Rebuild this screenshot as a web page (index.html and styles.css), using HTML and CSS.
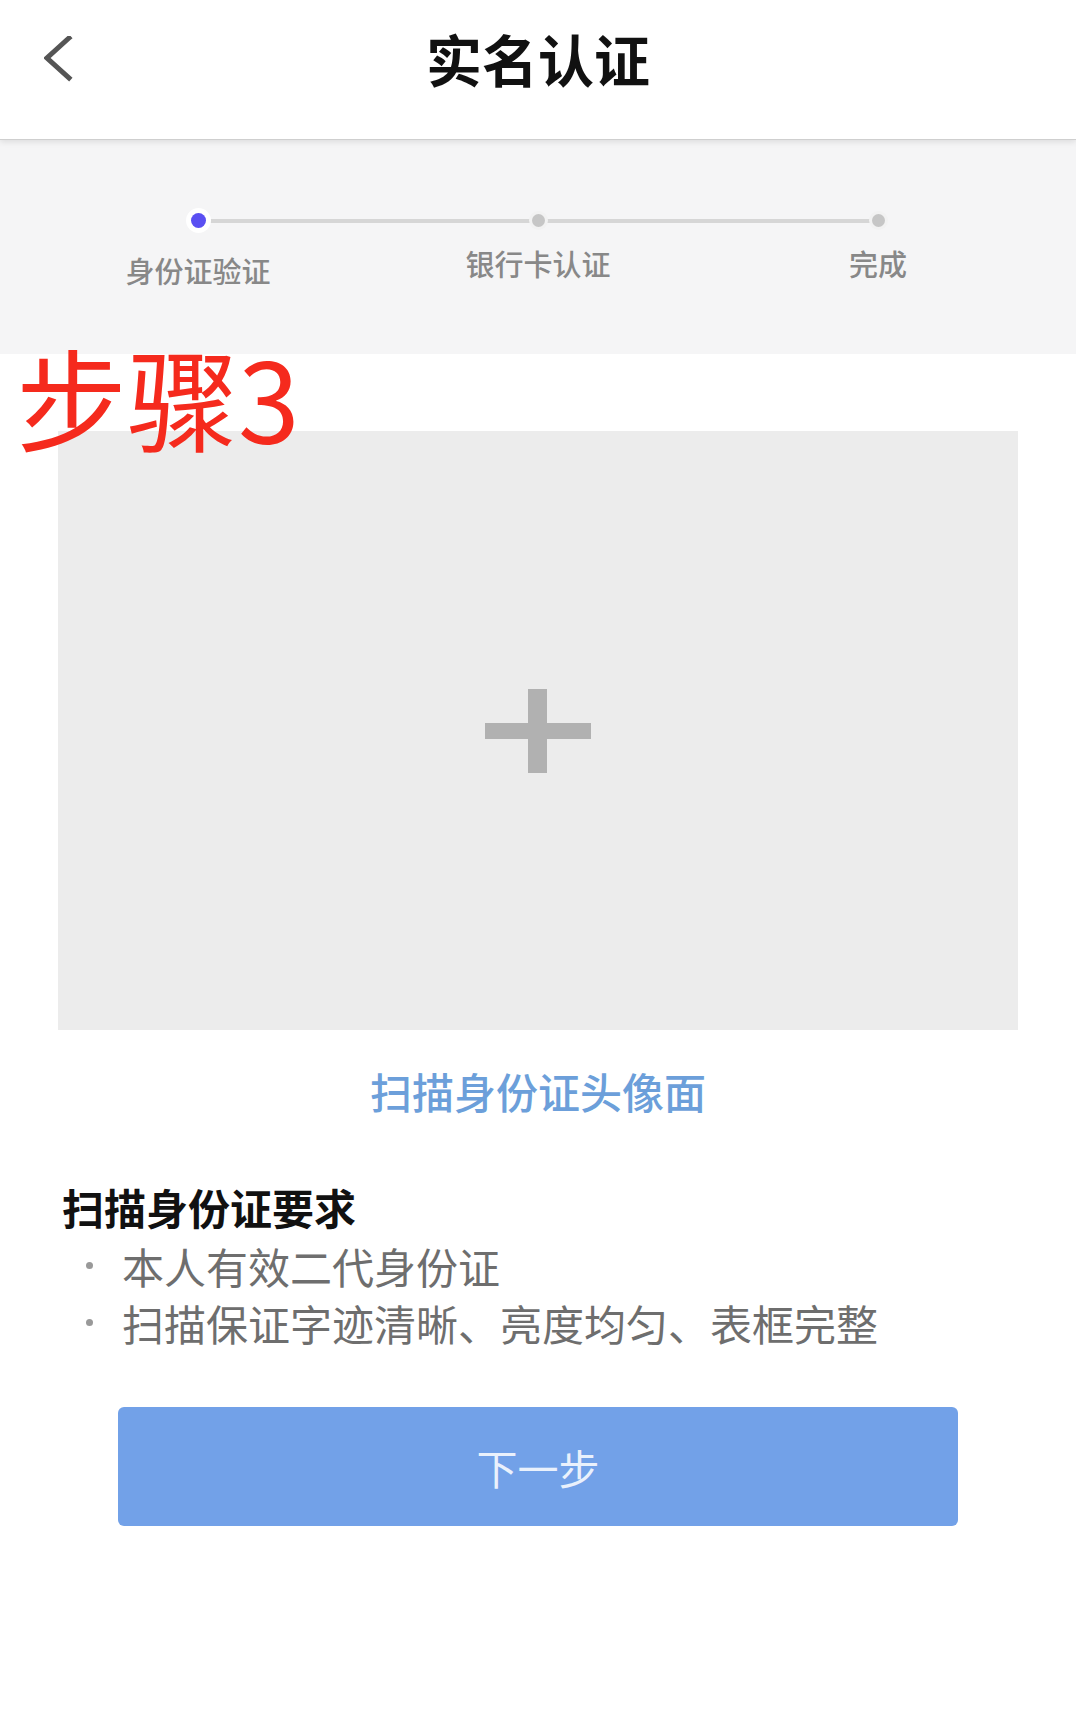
FILE: index.html
```html
<!DOCTYPE html>
<html lang="zh-CN">
<head>
    <meta charset="UTF-8">
    <meta name="viewport" content="width=device-width, initial-scale=1.0">
    <title>实名认证</title>
    <link rel="stylesheet" href="styles.css">
</head>
<body>
    <!-- 顶部导航 -->
    <header class="header">
        <span class="back">
            <svg width="30" height="46" viewBox="0 0 30 46">
                <polyline points="25,2 3,22 25,42" fill="none" stroke="#555" stroke-width="5" stroke-linecap="square"/>
            </svg>
        </span>
        <h1 class="title">实名认证</h1>
        <span></span>
    </header>

    <!-- 步骤条 -->
    <section class="steps">
        <div class="step">
            <span class="dot active"></span>
            <span class="step-label first">身份证验证</span>
        </div>
        <div class="step">
            <span class="dot"></span>
            <span class="step-label">银行卡认证</span>
        </div>
        <div class="step">
            <span class="dot"></span>
            <span class="step-label">完成</span>
        </div>
    </section>

    <main class="content">
        <div class="mark">步骤3</div>

        <!-- 上传框 -->
        <div class="upload">
            <svg width="106" height="84" viewBox="0 0 106 84">
                <rect x="0" y="34" width="106" height="16" fill="#b1b1b1"/>
                <rect x="43" y="0" width="19" height="84" fill="#b1b1b1"/>
            </svg>
        </div>
        <p class="caption">扫描身份证头像面</p>

        <!-- 要求 -->
        <h2 class="req-title">扫描身份证要求</h2>
        <ul class="req-list">
            <li>本人有效二代身份证</li>
            <li>扫描保证字迹清晰、亮度均匀、表框完整</li>
        </ul>

        <button class="next">下一步</button>
    </main>
</body>
</html>
```

FILE: styles.css
```css
body {
    margin: 0;
    padding: 0;
    background: #fff;
    font-family: "Noto Sans CJK SC", "Noto Sans", sans-serif;
    min-height: 1710px;
}
.header {
    position: relative;
    z-index: 2;
    height: 140px;
    box-sizing: border-box;
    display: grid;
    grid-template-columns: 1fr auto 1fr;
    align-items: start;
    padding-top: 30px;
    background: #fff;
    border-bottom: 1px solid #cfcfcf;
    box-shadow: 0 2px 6px rgba(0, 0, 0, 0.1);
}
.back {
    padding-left: 44px;
    padding-top: 6px;
}
.title {
    margin: 0;
    font-size: 56px;
    line-height: 56px;
    font-weight: 700;
    color: #111;
}
/* 步骤条 */
.steps {
    position: relative;
    height: 214px;
    box-sizing: border-box;
    padding-top: 68px;
    background: #f5f5f6;
    display: grid;
    grid-template-columns: repeat(3, 340px);
    justify-content: center;
}
.steps::before {
    content: "";
    position: absolute;
    top: 79px;
    left: 198px;
    right: 198px;
    height: 4px;
    background: #d6d6d6;
}
.step {
    display: flex;
    flex-direction: column;
    align-items: center;
}
.dot {
    position: relative;
    width: 13px;
    height: 13px;
    margin: 6px 0 7px;
    border-radius: 50%;
    background: #c6c6c6;
    box-shadow: 0 0 0 3px #f2f2f2;
}
.dot.active {
    width: 15px;
    height: 15px;
    margin: 5px 0 6px;
    background: #5a4ff2;
    box-shadow: 0 0 0 5px #fff;
}
.step-label {
    margin-top: 15px;
    font-size: 29px;
    line-height: 29px;
    color: #888;
    font-weight: 500;
}
.step-label.first {
    margin-top: 22px;
}
/* 主体 */
.content {
    position: relative;
    padding-top: 77px;
    display: flex;
    flex-direction: column;
    align-items: center;
}
.mark {
    position: absolute;
    top: -14px;
    left: 16px;
    font-size: 111px;
    line-height: 111px;
    color: #f52a1d;
    z-index: 3;
}
.upload {
    width: 960px;
    height: 599px;
    background: #ececec;
    display: flex;
    justify-content: center;
    align-items: center;
}
.caption {
    margin: 40px 0 0;
    font-size: 42px;
    line-height: 42px;
    color: #6c9fda;
    font-weight: 500;
}
.req-title {
    align-self: stretch;
    margin: 74px 0 0 62px;
    font-size: 42px;
    line-height: 42px;
    font-weight: 700;
    color: #111;
}
.req-list {
    align-self: stretch;
    list-style: none;
    margin: 9px 0 0;
    padding: 0 0 0 86px;
}
.req-list li {
    display: flex;
    align-items: center;
    gap: 29px;
    font-size: 42px;
    line-height: 57px;
    color: #6e6e6e;
}
.req-list li::before {
    content: "";
    width: 7px;
    height: 7px;
    border-radius: 50%;
    background: #999;
}
.next {
    margin-top: 56px;
    width: 840px;
    height: 119px;
    border: none;
    border-radius: 6px;
    background: #72a1e8;
    color: #eaf1fc;
    font-family: inherit;
    font-size: 41px;
    cursor: pointer;
}
```
